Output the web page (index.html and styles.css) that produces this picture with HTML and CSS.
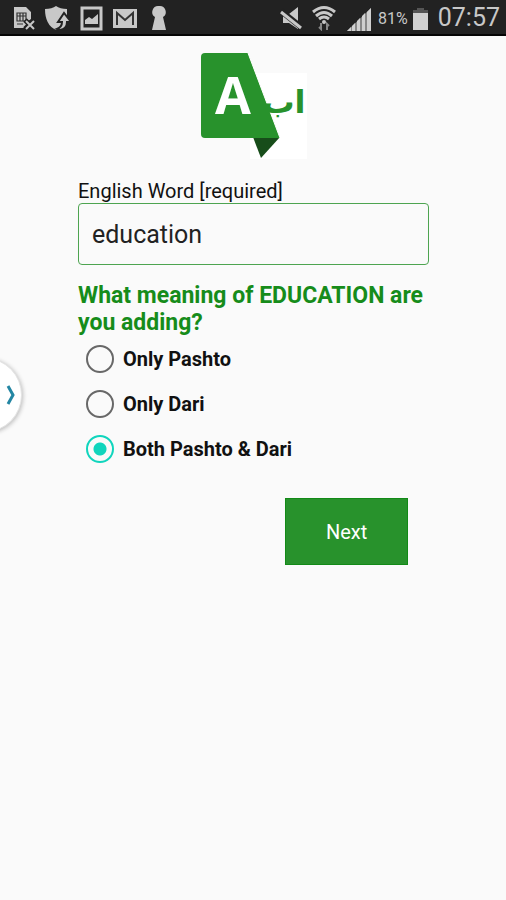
FILE: index.html
```html
<!DOCTYPE html>
<html lang="en">
<head>
<meta charset="utf-8">
<meta name="viewport" content="width=device-width, initial-scale=1">
<title>Add a word</title>
<link rel="stylesheet" href="styles.css">
</head>
<body>
<header class="status">
  <div class="status-group notices">
    <svg width="24" height="26" viewBox="0 0 24 26" aria-hidden="true">
      <path d="M2 2h12l5 5v7l-4 3v6H2z" fill="#c8c8c8"/>
      <path d="M5 8h9v8H5zM5 11h9M8 8v8M11 8v8M5 19h6" fill="none" stroke="#333" stroke-width="1.2"/>
      <path d="M13 15l9 9M22 15l-9 9" stroke="#222" stroke-width="5"/>
      <path d="M14 16l8 8M22 16l-8 8" stroke="#c8c8c8" stroke-width="2"/>
    </svg>
    <svg width="28" height="26" viewBox="0 0 28 26" aria-hidden="true">
      <path d="M12 1q4 3 11 3v8q-1 8-11 13Q1 20 1 4q7 0 11-3z" fill="#c8c8c8"/>
      <path d="M13 24q5-2 5-7h-4l6-9 7 9h-4q0 7-7 8z" fill="#c8c8c8" stroke="#222" stroke-width="2"/>
    </svg>
    <svg width="24" height="26" viewBox="0 0 24 26" aria-hidden="true">
      <path d="M2 3h19v21H2z" fill="none" stroke="#c8c8c8" stroke-width="3"/>
      <path d="M5 19v-4l4-3 3 2 6-5v10z" fill="#c8c8c8"/>
    </svg>
    <svg width="26" height="26" viewBox="0 0 26 26" aria-hidden="true">
      <path d="M1 4h24v19H1z" fill="#c8c8c8"/>
      <path d="M5 20V8l8 7 8-7v12" fill="none" stroke="#333" stroke-width="2"/>
    </svg>
    <svg class="keyhole" width="18" height="26" viewBox="0 0 18 26" aria-hidden="true">
      <path d="M9 1a6 6 0 0 1 4 11l3 13H2l3-13A6 6 0 0 1 9 1z" fill="#c8c8c8"/>
    </svg>
  </div>
  <div class="status-group system">
    <svg width="24" height="26" viewBox="0 0 24 26" aria-hidden="true">
      <path d="M4 9h6l9-7v22l-9-6H4z" fill="#c8c8c8"/>
      <path d="M2 6l20 16" stroke="#222" stroke-width="6"/>
      <path d="M2 7l20 16" stroke="#c8c8c8" stroke-width="3"/>
    </svg>
    <svg class="wifi" width="26" height="26" viewBox="0 0 26 26" aria-hidden="true">
      <path d="M2 7q11-9 22 0M5 11q8-7 16 0M8 14q5-4 10 0" fill="none" stroke="#c8c8c8" stroke-width="3"/>
      <circle cx="13" cy="17" r="2" fill="#c8c8c8"/>
      <path d="M10 18v6l-2-2M16 25v-6l2 2" fill="none" stroke="#888" stroke-width="2"/>
    </svg>
    <svg class="signal" width="26" height="26" viewBox="0 0 26 26" aria-hidden="true">
      <path d="M1 26L25 3v23z" fill="#888"/>
      <path d="M1 26l4-4v4zM6 26v-5l3-3v8zM11 26V16l3-3v13zM16 26V11l3-3v18zM21 26V7l4-4v23z" fill="#d0d0d0"/>
    </svg>
    <span class="percent">81%</span>
    <svg width="18" height="26" viewBox="0 0 18 26" aria-hidden="true">
      <path d="M1 5h4V3h7v2h4v4H1z" fill="#555"/>
      <path d="M1 8h15v17H1z" fill="#d0d0d0"/>
    </svg>
    <time class="clock">07:57</time>
  </div>
</header>

<button class="drawer" type="button" aria-label="Open panel">
  <svg width="10" height="22" viewBox="0 0 10 22" aria-hidden="true"><path d="M2 2l5 9-5 9" fill="none" stroke="#2386a3" stroke-width="3"/></svg>
</button>

<main class="page">
  <svg class="logo" width="108" height="108" viewBox="0 0 108 108" role="img" aria-label="English, Pashto and Dari dictionary">
    <path d="M50 21h57v86H50z" fill="#fff"/>
    <path d="M53 85h27L61 106z" fill="#174d1a"/>
    <path d="M5 1h43l32 85H5q-4 0-4-4V5q0-4 4-4z" fill="#28922c"/>
    <path d="M48 1l32 85" fill="none" stroke="#fff"/>
    <text class="logo-arabic" x="84" y="61" text-anchor="middle" direction="rtl">اب</text>
    <text class="logo-latin" x="33" y="62" text-anchor="middle">A</text>
  </svg>

  <form class="form">
    <label class="label" for="word">English Word [required]</label>
    <input class="word" id="word" type="text" value="education" required>
    <fieldset class="choices">
      <legend class="question">What meaning of EDUCATION are you adding?</legend>
      <label class="choice"><input type="radio" name="meaning">Only Pashto</label>
      <label class="choice"><input type="radio" name="meaning">Only Dari</label>
      <label class="choice"><input type="radio" name="meaning" checked>Both Pashto &amp; Dari</label>
    </fieldset>
    <button class="next" type="button">Next</button>
  </form>
</main>
</body>
</html>
```
FILE: styles.css
```css
* {
  box-sizing: border-box;
}

body {
  margin: 0;
  min-height: 100vh;
  background: #fafafa;
  color: #111;
  font-family: Roboto, "Liberation Sans", sans-serif;
}

.status {
  display: flex;
  align-items: center;
  justify-content: space-between;
  height: 36px;
  padding: 2px 6px 0 12px;
  background: #222;
  border-bottom: 2px solid #050505;
  color: #c8c8c8;
}

.status-group {
  display: flex;
  align-items: center;
}

.notices {
  gap: 8px;
}

.keyhole {
  margin-left: 4px;
}

.system {
  gap: 4px;
}

.wifi {
  margin-left: 4px;
}

.signal {
  margin-left: 5px;
}

.percent {
  margin-left: 2px;
  font-size: 16px;
}

.clock {
  margin-left: 4px;
  font-size: 25px;
  line-height: 32px;
}

.drawer {
  position: absolute;
  top: 358px;
  left: -50px;
  display: flex;
  align-items: center;
  justify-content: flex-end;
  width: 72px;
  height: 74px;
  padding: 0 5px 0 0;
  border: 1px solid #e4e4e4;
  border-radius: 50%;
  background: #fff;
  box-shadow: 1px 1px 4px #bbb;
}

.page {
  padding: 16px 77px 0 78px;
}

.logo {
  display: block;
  margin: 0 auto;
}

.logo-latin {
  font: 700 52px "Open Sans", sans-serif;
  fill: #fff;
}

.logo-arabic {
  font: 700 32px "DejaVu Sans", sans-serif;
  fill: #28922c;
}

.form {
  display: flex;
  flex-direction: column;
  margin-top: 19px;
}

.label {
  font-size: 20px;
  line-height: 24px;
}

.word {
  width: 100%;
  height: 62px;
  padding: 0 13px;
  border: 1px solid #4da450;
  border-radius: 4px;
  background: transparent;
  color: #222;
  font: 400 25px Roboto, sans-serif;
}

.choices {
  display: grid;
  min-width: 0;
  margin: 17px 0 0;
  padding: 0;
  border: 0;
}

.question {
  padding: 0;
  color: #168c1a;
  font-size: 23px;
  font-weight: 700;
  line-height: 27px;
}

.choice {
  display: flex;
  align-items: center;
  gap: 9px;
  height: 45px;
  padding-left: 8px;
  font-size: 20px;
  font-weight: 700;
}

.choice input {
  appearance: none;
  width: 28px;
  height: 28px;
  margin: 0;
  border: 2px solid #686868;
  border-radius: 50%;
}

.choice input:checked {
  border-color: #10d5bd;
  background: radial-gradient(circle, #10d5bd 6px, transparent 7px);
}

.next {
  align-self: flex-end;
  width: 35%;
  height: 67px;
  margin: 27px 21px 0 0;
  border: 1px solid #128a17;
  background: #28922c;
  color: #fff;
  font: 400 20px Roboto, sans-serif;
}
```
